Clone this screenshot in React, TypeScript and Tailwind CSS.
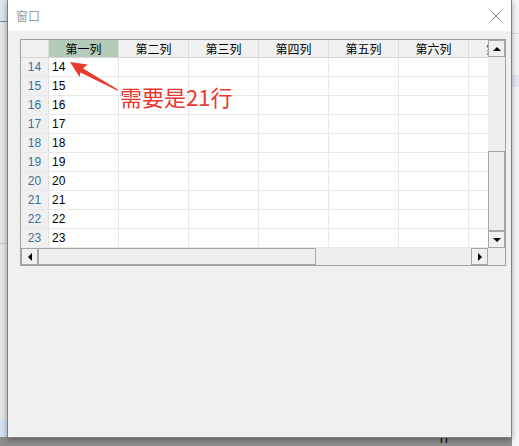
import React from 'react';

const cols = ['第一列', '第二列', '第三列', '第四列', '第五列', '第六列'];
const rows = [14, 15, 16, 17, 18, 19, 20, 21, 22, 23];

const font = { fontFamily: '"Liberation Sans", "Noto Sans CJK SC", sans-serif' };

function Tri({ dir }: { dir: 'up' | 'down' | 'left' | 'right' }) {
  const pts = {
    up: '0,4 4,0 8,4',
    down: '0,0 8,0 4,4',
    left: '4,0 4,8 0,4',
    right: '0,0 0,8 4,4',
  }[dir];
  const w = dir === 'up' || dir === 'down' ? 8 : 4;
  const h = dir === 'up' || dir === 'down' ? 4 : 8;
  return (
    <svg width={w} height={h} viewBox={`0 0 ${w} ${h}`}>
      <polygon points={pts} fill="#000" />
    </svg>
  );
}

function ScrollBtn({ dir }: { dir: 'up' | 'down' | 'left' | 'right' }) {
  return (
    <div className="w-[17px] h-[17px] shrink-0 bg-[#f0f0f0] border border-[#a6a6a6] flex items-center justify-center">
      <Tri dir={dir} />
    </div>
  );
}

export default function App() {
  return (
    <div className="relative w-[519px] h-[446px] overflow-hidden bg-[#e6e6e6]" style={font}>
      {/* desktop behind */}
      <div className="absolute left-0 top-0 w-[8px] h-[21px] bg-[#dde5ee]" />
      <div className="absolute left-0 top-[21px] w-[8px] h-px bg-[#8a8a8a]" />
      <div className="absolute left-0 top-[243px] w-[8px] h-px bg-[#c8c8c8]" />
      <div className="absolute left-0 top-[420px] w-[8px] h-[17px] bg-[#d6e2ee]" />
      <div className="absolute left-0 top-[437px] w-[519px] h-[9px] bg-[#8e8e8e]" />
      <div className="absolute left-[512px] top-0 w-[7px] h-[446px] bg-[#f4f6f9]" />
      <div className="absolute left-[512px] top-[33px] w-[7px] h-px bg-[#dcdcdc]" />
      <div className="absolute left-[512px] top-[75px] w-[7px] h-[12px] bg-[#e4eaf3]" />
      <div className="absolute left-[440px] top-[432px] text-[12px] leading-[14px] text-black">lT</div>

      {/* window */}
      <div className="absolute left-[7px] top-0 w-[505px] h-[438px] border-x border-b border-[#7f7f7f] shadow-[0_2px_6px_rgba(0,0,0,0.35)] bg-[#f0f0f0] flex flex-col">
        <div className="h-[31px] bg-white flex items-center justify-between pl-[8px] pr-[9px]">
          <span className="text-[12px] text-[#9c9c9c]" style={{ fontFamily: '"Noto Sans CJK SC", sans-serif' }}>窗口</span>
          <svg width="12" height="12" viewBox="0 0 12 12">
            <path d="M0.5 0.5 L11.5 11.5 M11.5 0.5 L0.5 11.5" stroke="#8a8a8a" strokeWidth="1" />
          </svg>
        </div>
        <div className="pt-[8px] pl-[12px]">
          <div className="w-[486px] border border-[#a0a0a0] bg-white flex flex-col">
            <div className="flex h-[208px]">
              <div className="w-[467px] overflow-hidden">
                <div className="flex h-[18px] border-b border-[#d6d6d6] bg-[#f0f0f0] text-[12px] text-black" style={{ fontFamily: '"Noto Sans CJK SC", sans-serif' }}>
                  <div className="w-[28px] shrink-0 border-r border-[#dcdcdc]" />
                  {cols.map((c, i) => (
                    <div
                      key={c}
                      className={`w-[70px] shrink-0 border-r border-[#dcdcdc] flex items-center justify-center leading-none ${i === 0 ? 'bg-[#b5cbb9]' : ''}`}
                    >
                      {c}
                    </div>
                  ))}
                  <div className="w-[70px] shrink-0 flex items-center justify-center leading-none">第七列</div>
                </div>
                {rows.map((r) => (
                  <div key={r} className="flex h-[19px] border-b border-[#e8e8e8] text-[12px]">
                    <div className="w-[28px] shrink-0 bg-[#f0f0f0] border-r border-[#e0e0e0] flex items-center justify-center text-[#3d6d9e]">
                      {r}
                    </div>
                    <div className="w-[70px] shrink-0 border-r border-[#e8e8e8] flex items-center pl-[3px] text-black">{r}</div>
                    {cols.slice(1).map((c) => (
                      <div key={c} className="w-[70px] shrink-0 border-r border-[#e8e8e8]" />
                    ))}
                    <div className="w-[70px] shrink-0" />
                  </div>
                ))}
              </div>
              <div className="w-[17px] flex flex-col bg-[#efefef]">
                <ScrollBtn dir="up" />
                <div className="h-[94px]" />
                <div className="h-[80px] bg-[#efefef] border border-[#a8a8a8]" />
                <ScrollBtn dir="down" />
              </div>
            </div>
            <div className="flex h-[17px] bg-[#efefef]">
              <ScrollBtn dir="left" />
              <div className="w-[278px] h-[17px] border border-[#a8a8a8] bg-[#efefef]" />
              <div className="w-[155px]" />
              <ScrollBtn dir="right" />
              <div className="w-[17px] bg-[#efefef]" />
            </div>
          </div>
        </div>
      </div>

      {/* annotation */}
      <svg className="absolute left-0 top-0" width="519" height="446" viewBox="0 0 519 446">
        <polygon
          points="70,62 87.5,64.5 83,68.4 118,89.5 117,90.5 80.5,72.5 79.5,77"
          fill="#ea3a30"
        />
      </svg>
      <div
        className="absolute left-[120px] top-[82px] text-[22px] leading-[28px] text-[#e8382f]"
        style={{ fontFamily: '"Noto Sans CJK SC", sans-serif' }}
      >
        需要是21行
      </div>
    </div>
  );
}
